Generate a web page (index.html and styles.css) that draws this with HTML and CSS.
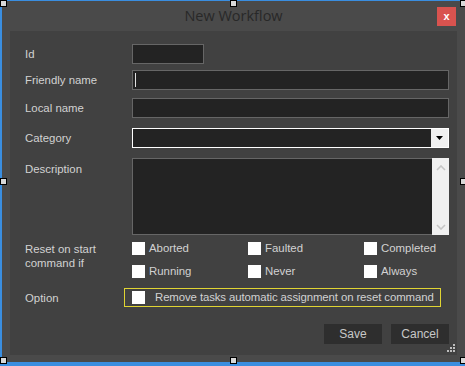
FILE: index.html
```html
<!DOCTYPE html>
<html lang="en">
<head>
    <meta charset="UTF-8">
    <title>New Workflow</title>
    <link rel="stylesheet" href="styles.css">
</head>
<body>
    <div class="window">
        <div class="titlebar">
            <span></span>
            <div class="title">New Workflow</div>
            <button class="close">x</button>
        </div>

        <div class="panel">
            <div class="row row-id">
                <label>Id</label>
                <div class="field short"></div>
            </div>
            <div class="row">
                <label>Friendly name</label>
                <div class="field"><span class="caret"></span></div>
            </div>
            <div class="row row-local">
                <label>Local name</label>
                <div class="field"></div>
            </div>
            <div class="row row-cat">
                <label>Category</label>
                <div class="field combo">
                    <span class="combo-btn">
                        <svg width="7" height="4" viewBox="0 0 7 4"><path d="M0 0h7L3.5 4z" fill="#000"/></svg>
                    </span>
                </div>
            </div>
            <div class="row row-desc">
                <label>Description</label>
                <div class="field memo">
                    <span class="scroll">
                        <svg width="10" height="6" viewBox="0 0 10 6"><path d="M1 5l4-4 4 4" fill="none" stroke="#c6c6c6" stroke-width="1.6"/></svg>
                        <svg width="10" height="6" viewBox="0 0 10 6"><path d="M1 1l4 4 4-4" fill="none" stroke="#c6c6c6" stroke-width="1.6"/></svg>
                    </span>
                </div>
            </div>
            <div class="row row-reset">
                <label>Reset on start<br>command if</label>
                <div class="checks">
                    <span class="check"><i></i>Aborted</span>
                    <span class="check"><i></i>Faulted</span>
                    <span class="check"><i></i>Completed</span>
                    <span class="check"><i></i>Running</span>
                    <span class="check"><i></i>Never</span>
                    <span class="check"><i></i>Always</span>
                </div>
            </div>
            <div class="row row-option">
                <label>Option</label>
                <div class="option"><i></i>Remove tasks automatic assignment on reset command</div>
            </div>
            <div class="buttons">
                <button class="btn">Save</button>
                <button class="btn">Cancel</button>
            </div>
            <svg class="grip" width="9" height="9" viewBox="0 0 9 9" fill="#bdbdbd">
                <rect x="6" y="0" width="2" height="2"/>
                <rect x="3" y="3" width="2" height="2"/><rect x="6" y="3" width="2" height="2"/>
                <rect x="0" y="6" width="2" height="2"/><rect x="3" y="6" width="2" height="2"/><rect x="6" y="6" width="2" height="2"/>
            </svg>
        </div>
    </div>

    <!-- designer selection handles -->
    <span class="handle" style="left:0;top:0"></span>
    <span class="handle" style="left:230px;top:0"></span>
    <span class="handle" style="left:460px;top:0"></span>
    <span class="handle" style="left:0;top:178px"></span>
    <span class="handle" style="left:460px;top:178px"></span>
    <span class="handle" style="left:0;top:357px"></span>
    <span class="handle" style="left:230px;top:357px"></span>
    <span class="handle" style="left:460px;top:357px"></span>
</body>
</html>
```

FILE: styles.css
```css
/* General */
body {
    margin: 0;
    width: 465px;
    height: 366px;
    background-color: #3a8ee0;
    font-family: "Liberation Sans", Arial, sans-serif;
    font-size: 11.4px;
    color: #d2d2d2;
    position: relative;
    overflow: hidden;
}

.window {
    margin: 1px 0 0 2px;
    width: 463px;
    height: 361px;
    background-color: #4a4a4a;
    display: flex;
    flex-direction: column;
    box-sizing: border-box;
}

/* Title bar */
.titlebar {
    height: 30px;
    display: grid;
    grid-template-columns: 1fr auto 1fr;
    align-items: start;
}

.title {
    font-family: "Open Sans", sans-serif;
    font-size: 14.5px;
    color: #282828;
    padding-top: 5px;
}

.close {
    justify-self: end;
    margin: 6px 9px 0 0;
    width: 19px;
    height: 19px;
    padding: 0;
    border: none;
    background-color: #d9534f;
    color: #fff;
    font-family: "Liberation Sans", Arial, sans-serif;
    font-weight: bold;
    font-size: 11px;
    line-height: 17px;
}

/* Content panel */
.panel {
    position: relative;
    margin: 0 8px 0 8px;
    height: 324px;
    background-color: #414141;
    padding: 13px 8px 0 15px;
    box-sizing: border-box;
}

.row {
    display: grid;
    grid-template-columns: 107px 1fr;
    align-items: center;
    margin-bottom: 8px;
}

.row label {
    line-height: 14px;
}

.row-id { margin-bottom: 6px; }
.row-local { margin-bottom: 10px; }
.row-cat { margin-bottom: 10px; }
.row-desc { align-items: start; margin-bottom: 7px; }
.row-desc label { padding-top: 4px; }
.row-reset { align-items: start; margin-bottom: 10px; }
.row-reset label { padding-top: 0; }

.field {
    position: relative;
    height: 20px;
    background-color: #232323;
    border: 1px solid #666;
    box-sizing: border-box;
}

.field.short {
    width: 72px;
}

.caret {
    position: absolute;
    left: 2px;
    top: 2px;
    width: 1px;
    height: 14px;
    background-color: #e0e0e0;
}

.combo {
    border-color: #fff;
    display: flex;
    justify-content: flex-end;
}

.combo-btn {
    width: 17px;
    background-color: #f0f0f0;
    display: flex;
    align-items: center;
    justify-content: center;
}

.memo {
    height: 77px;
    display: flex;
    justify-content: flex-end;
    border-right: none;
}

.scroll {
    width: 17px;
    margin: -1px 0;
    background-color: #f0f0f0;
    display: flex;
    flex-direction: column;
    align-items: center;
    justify-content: space-between;
    padding: 7px 0 5px;
    box-sizing: border-box;
}

/* Checkboxes */
.checks {
    display: grid;
    grid-template-columns: 116px 116px 1fr;
    row-gap: 10px;
}

.check,
.option {
    display: flex;
    align-items: center;
    line-height: 13px;
    white-space: nowrap;
}

.check i,
.option i {
    width: 13px;
    height: 13px;
    background-color: #fff;
    margin-right: 4px;
    flex: none;
}

.option {
    margin-left: -8px;
    width: 317px;
    height: 19px;
    border: 1px solid #e0d433;
    box-sizing: border-box;
    padding-left: 7px;
    letter-spacing: -0.1px;
}

.option i {
    margin-right: 10px;
}

.row-option {
    margin-bottom: 17px;
}

/* Buttons */
.buttons {
    display: flex;
    justify-content: flex-end;
    gap: 9px;
}

.btn {
    width: 58px;
    height: 20px;
    border: none;
    padding: 0;
    background-color: #2e2e2e;
    color: #c8c8c8;
    font-family: "Liberation Sans", Arial, sans-serif;
    font-size: 12px;
}

.grip {
    position: absolute;
    right: 1px;
    bottom: 2px;
}

/* Selection handles */
.handle {
    position: absolute;
    width: 5px;
    height: 5px;
    background-color: #d8d8d8;
    border: 1px solid #000;
}
```
